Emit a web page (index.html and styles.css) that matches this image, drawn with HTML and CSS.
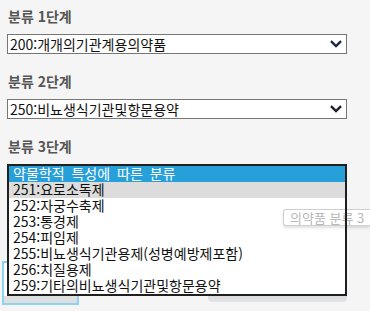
FILE: index.html
```html
<!DOCTYPE html>
<html lang="ko">
<head>
    <meta charset="UTF-8">
    <meta name="viewport" content="width=device-width, initial-scale=1.0">
    <title>의약품 분류</title>
    <link rel="stylesheet" href="styles.css">
</head>
<body>
    <div class="form">
        <div class="field">
            <div class="label">분류 1단계</div>
            <div class="select">
                <span class="value">200:개개의기관계용의약품</span>
                <svg class="chevron" width="12" height="8" viewBox="0 0 12 8"><polyline points="1,1.2 6,6 11,1.2" fill="none" stroke="#1b2640" stroke-width="2.4"/></svg>
            </div>
        </div>
        <div class="field">
            <div class="label">분류 2단계</div>
            <div class="select">
                <span class="value">250:비뇨생식기관및항문용약</span>
                <svg class="chevron" width="12" height="8" viewBox="0 0 12 8"><polyline points="1,1.2 6,6 11,1.2" fill="none" stroke="#1e1e2a" stroke-width="2.4"/></svg>
            </div>
        </div>
        <div class="field field-open">
            <div class="label">분류 3단계</div>
            <div class="select select-focus"></div>
            <div class="ghost-box"></div>
            <div class="list-shadow"></div>
            <ul class="dropdown">
                <li class="selected">약물학적 특성에 따른 분류</li>
                <li class="hover">251:요로소독제</li>
                <li>252:자궁수축제</li>
                <li>253:통경제</li>
                <li>254:피임제</li>
                <li>255:비뇨생식기관용제(성병예방제포함)</li>
                <li>256:치질용제</li>
                <li>259:기타의비뇨생식기관및항문용약</li>
            </ul>
            <div class="tooltip">의약품 분류 3</div>
            <div class="tooltip-edge"></div>
        </div>
    </div>
</body>
</html>
```

FILE: styles.css
```css
body {
    margin: 0;
    min-height: 311px;
    background: #f5f5f5;
    font-family: "Noto Sans CJK KR", "Noto Sans", sans-serif;
    color: #111;
}
.form {
    padding: 6px 23px 0 7px;
}
.field {
    position: relative;
    margin-bottom: 17px;
}
.label {
    font-size: 14px;
    line-height: 20px;
    font-weight: bold;
    color: #555;
    padding-left: 1px;
    margin-bottom: 8px;
}
.select {
    display: flex;
    align-items: center;
    justify-content: space-between;
    height: 18px;
    border: 1px solid #767676;
    background: #fff;
    padding: 0 4px 0 2px;
}
.value {
    font-size: 14px;
    line-height: 18px;
}
.chevron {
    display: block;
}
.ghost-box {
    position: absolute;
    left: -5px;
    top: 125px;
    width: 73px;
    height: 40px;
    border: 2px solid #8dd3ef;
    background: #fff;
    box-shadow: inset 0 -7px 0 #dedfe0;
}
.tooltip {
    position: absolute;
    left: 276px;
    top: 73px;
    width: 80px;
    height: 15px;
    padding-left: 6px;
    border: 1px solid #cfcfcf;
    border-right: 0;
    border-radius: 3px 0 0 3px;
    background: #fff;
    box-shadow: 0 2px 3px rgba(0, 0, 0, 0.12);
    font-size: 13px;
    line-height: 15px;
    color: #b8b8b8;
    white-space: nowrap;
    overflow: hidden;
}
.tooltip-edge {
    position: absolute;
    left: 338px;
    top: 72px;
    width: 2px;
    height: 20px;
    background: #1f1f1f;
}
.list-shadow {
    position: absolute;
    left: 201px;
    top: 150px;
    width: 139px;
    height: 16px;
    border-radius: 0 0 4px 4px;
    background: linear-gradient(#c9cccf, #e2e4e6);
}
.dropdown {
    position: absolute;
    left: 0;
    top: 28px;
    width: 336px;
    margin: 0;
    padding: 0;
    list-style: none;
    border: 2px solid #1f1f1f;
    background: #fff;
}
.dropdown li {
    height: 16px;
    padding-left: 4px;
    font-size: 14px;
    line-height: 15px;
    white-space: nowrap;
}
.dropdown .selected {
    background: #27a0da;
    color: #fff;
    word-spacing: 3px;
}
.dropdown .hover {
    background: #dcdcdc;
}
```
